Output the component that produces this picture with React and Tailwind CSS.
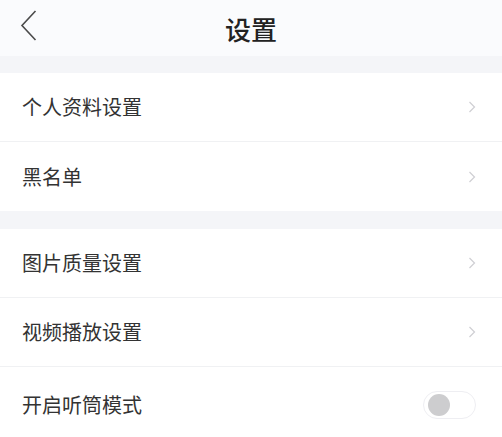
import React, { useState } from "react";

const groups = [
    ["个人资料设置", "黑名单"],
    ["图片质量设置", "视频播放设置"],
];

function Chevron() {
    return (
        <svg width="8" height="12" viewBox="0 0 8 12" fill="none" className="shrink-0">
            <path d="M1.5 1 L6.5 6 L1.5 11" stroke="#cfcfd3" strokeWidth="1.2" />
        </svg>
    );
}

function Row({ label, last, tall, children }) {
    return (
        <div className={`${tall ? "h-[75px]" : "h-[69px]"} bg-white flex items-center justify-between pl-[22px] pr-[26px] ${last ? "" : "border-b border-[#f0f1f3]"}`}>
            <span className="text-[20px] text-[#333] leading-none">{label}</span>
            {children}
        </div>
    );
}

export default function App() {
    const [earpiece, setEarpiece] = useState(false);

    return (
        <div className="w-[502px] h-[437px] overflow-hidden bg-white" style={{ fontFamily: '"Noto Sans CJK SC", "Noto Sans", sans-serif' }}>
            {/* 顶部导航 */}
            <header className="h-[56px] bg-[#fafbfd] flex items-center relative">
                <button className="absolute left-[20px] top-[10px] w-[18px] h-[31px] flex items-center">
                    <svg width="17" height="31" viewBox="0 0 17 31" fill="none">
                        <path d="M15.5 1 L2 15.5 L15.5 30" stroke="#4a4a4a" strokeWidth="1.6" />
                    </svg>
                </button>
                <h1 className="flex-1 text-center text-[26px] font-medium text-[#222] leading-none pt-[1px]">设置</h1>
            </header>

            {groups.map((items, gi) => (
                <section key={gi}>
                    <div className={`${gi === 0 ? "h-[17px]" : "h-[18px]"} bg-[#f4f5f8]`}></div>
                    {items.map((label, i) => (
                        <Row key={label} label={label} last={gi === 0 && i === items.length - 1}>
                            <Chevron />
                        </Row>
                    ))}
                </section>
            ))}

            <Row label="开启听筒模式" last tall>
                <button
                    onClick={() => setEarpiece(!earpiece)}
                    className={`w-[53px] h-[28px] rounded-full border border-[#eeeef2] flex items-center px-[4px] ${earpiece ? "bg-[#4cd964] justify-end" : "bg-white justify-start"}`}
                >
                    <span className={`w-[22px] h-[22px] rounded-full ${earpiece ? "bg-white" : "bg-[#cdcdcf]"}`}></span>
                </button>
            </Row>
        </div>
    );
}
